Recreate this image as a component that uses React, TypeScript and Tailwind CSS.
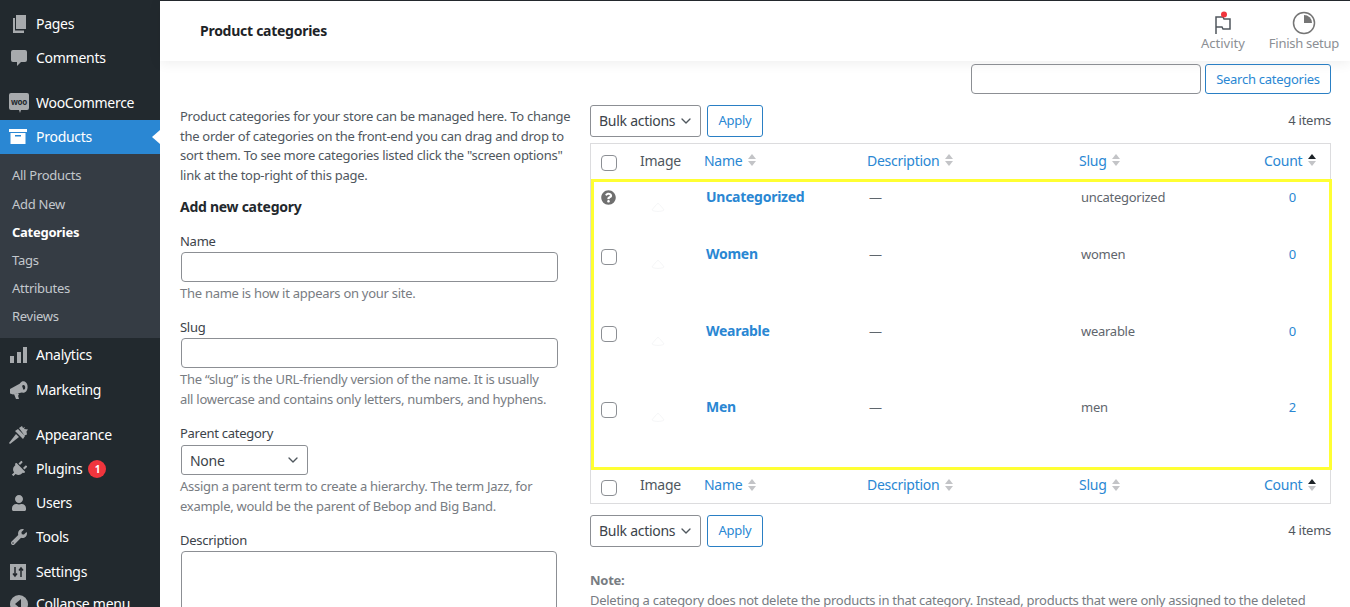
import { FaPlug, FaUser, FaWrench, FaQuestionCircle } from 'react-icons/fa'
import { ChevronDown } from 'lucide-react'

const font = { fontFamily: '"Noto Sans", sans-serif' }

const PagesIcon = () => (
  <svg viewBox="0 0 20 20" className="w-5 h-5 fill-[#a7aaad]">
    <path d="M7 1h10v14H7z" />
    <path d="M4 4h2v12.500h9V19H4z" />
  </svg>
)

const CommentsIcon = () => (
  <svg viewBox="0 0 20 20" className="w-5 h-5 fill-[#a7aaad]">
    <path d="M4 2h12a2 2 0 0 1 2 2v8a2 2 0 0 1-2 2h-4l-4 4v-4H4a2 2 0 0 1-2-2V4a2 2 0 0 1 2-2z" />
  </svg>
)

const WooIcon = () => (
  <svg viewBox="0 0 20 20" className="w-5 h-5">
    <path className="fill-[#a7aaad]" d="M2 0h16a2 2 0 0 1 2 2v13a2 2 0 0 1-2 2h-6l-1 3-1-3H2a2 2 0 0 1-2-2V2a2 2 0 0 1 2-2z" />
    <text x="10" y="11.500" textAnchor="middle" fontSize="8" fontWeight="700" fill="#23282d">woo</text>
  </svg>
)

const ProductsIcon = () => (
  <svg viewBox="0 0 20 20" className="w-5 h-5 fill-white">
    <path d="M0 2h18v3H0z" />
    <path fillRule="evenodd" d="M1.500 6h15v11h-15zM6 8v1.500h6V8z" />
  </svg>
)

const AnalyticsIcon = () => (
  <svg viewBox="0 0 20 20" className="w-5 h-5 fill-[#a7aaad]">
    <path d="M1 11h4v7H1zM8 7h4v11H8zM14 2h4v16h-4z" />
  </svg>
)

const MarketingIcon = () => (
  <svg viewBox="0 0 20 20" className="w-5 h-5 fill-[#a7aaad]">
    <path d="M1 9l11-6 3 9-11 2.500-3-1z" />
    <path fillRule="evenodd" d="M13 1.500c2.500-1 5 1 5.500 4s-.5 6-3 7-4.500-1.500-5-4.500.5-5.500 2.500-6.500zM14 5c-1 .5-1 2-.7 3s1 2 2 1.600 1-2 .8-3-1-2-2.100-1.600z" />
    <path d="M5 14l4-1 1 2-1 .5L10 19H7z" />
  </svg>
)

const AppearanceIcon = () => (
  <svg viewBox="0 0 20 20" className="w-5 h-5 fill-[#a7aaad]">
    <path d="M0 18l7-9 3 3-9 7z" />
    <path d="M6 6l3-2 7 7-2 3zM10 3l3-2 1 2 2-1-1 2 4 .5-1.500 2 .5 3-2.500 1z" />
  </svg>
)

const SettingsIcon = () => (
  <svg viewBox="0 0 20 20" className="w-5 h-5">
    <path className="fill-[#a7aaad]" d="M1 2h16v16H1z" />
    <path stroke="#23282d" strokeWidth="1.500" fill="none" d="M6 5v9M4 11.500L6 14l2-2.500M12 15V6M10 8.500L12 6l2 2.500" />
  </svg>
)

const CollapseIcon = () => (
  <svg viewBox="0 0 20 20" className="w-5 h-5">
    <circle cx="10" cy="10" r="9" className="fill-[#a7aaad]" />
    <path d="M12 5v10l-6-5z" fill="#23282d" />
  </svg>
)

const Item = ({ icon, label, badge, active, className = '' }: { icon: React.ReactNode; label: string; badge?: string; active?: boolean; className?: string }) => (
  <div className={`relative flex items-center h-[34px] text-[14px] text-white whitespace-nowrap ${active ? 'bg-[#2a87d3]' : ''} ${className}`}>
    <span className="w-[36px] flex justify-center pl-[1px] shrink-0">{icon}</span>
    <span className="pb-[2px]">{label}</span>
    {badge && (
      <span className="ml-[6px] w-[18px] h-[18px] rounded-full bg-[#f0353d] text-[10px] font-bold flex items-center justify-center">{badge}</span>
    )}
    {active && (
      <span className="absolute right-0 top-[10px] border-y-[7px] border-r-[8px] border-y-transparent border-r-white" />
    )}
  </div>
)

const Sidebar = () => (
  <aside className="w-[160px] shrink-0 h-[607px] bg-[#22292e] overflow-hidden pt-[7px]">
    <Item icon={<PagesIcon />} label="Pages" />
    <Item icon={<CommentsIcon />} label="Comments" />
    <div className="h-[11px]" />
    <Item icon={<WooIcon />} label="WooCommerce" />
    <Item icon={<ProductsIcon />} label="Products" active />
    <div className="bg-[#353c44] h-[184px] pt-[8px] pl-[12px] text-[13px] text-[#c3c8cd]">
      <div className="h-[28px] flex items-center">All Products</div>
      <div className="h-[29px] flex items-center">Add New</div>
      <div className="h-[28px] flex items-center font-bold text-white">Categories</div>
      <div className="h-[28px] flex items-center">Tags</div>
      <div className="h-[28px] flex items-center">Attributes</div>
      <div className="h-[28px] flex items-center">Reviews</div>
    </div>
    <Item icon={<AnalyticsIcon />} label="Analytics" />
    <Item icon={<MarketingIcon />} label="Marketing" className="h-[36px]" />
    <div className="h-[10px]" />
    <Item icon={<AppearanceIcon />} label="Appearance" />
    <Item icon={<FaPlug size={17} className="text-[#a7aaad] rotate-45" />} label="Plugins" badge="1" />
    <Item icon={<FaUser size={16} className="text-[#a7aaad]" />} label="Users" />
    <Item icon={<FaWrench size={16} className="text-[#a7aaad]" />} label="Tools" />
    <Item icon={<SettingsIcon />} label="Settings" className="h-[36px]" />
    <Item icon={<CollapseIcon />} label="Collapse menu" className="text-[#c3c8cd] text-[13px] -mt-[3px]" />
  </aside>
)

const SortArrows = ({ asc }: { asc?: boolean }) => (
  <span className="ml-[6px] inline-flex flex-col gap-[2px]">
    <span className={`border-x-[4px] border-b-[5px] border-x-transparent ${asc ? 'border-b-[#1d2327]' : 'border-b-[#c3c4c7]'}`} />
    <span className="border-x-[4px] border-t-[5px] border-x-transparent border-t-[#c3c4c7]" />
  </span>
)

const Checkbox = () => <span className="block w-4 h-4 rounded-[4px] border border-[#8c8f94] bg-white" />

const BulkBar = () => (
  <div className="flex items-center">
    <div className="w-[111px] h-[32px] rounded-[3px] border border-[#8c8f94] pl-[8px] pr-[6px] pb-[2px] flex items-center justify-between text-[14px] text-[#3c434a] whitespace-nowrap">
      Bulk actions
      <ChevronDown size={16} className="text-[#50575e] shrink-0 mt-[2px]" />
    </div>
    <div className="ml-[6px] w-[56px] h-[32px] rounded-[3px] border border-[#2a7fc4] text-[#2a87d3] text-[13px] flex items-center justify-center">Apply</div>
    <span className="ml-auto text-[13px] text-[#50575e]">4 items</span>
  </div>
)

const HeadRow = ({ className = '' }: { className?: string }) => (
  <div className={`flex items-center pb-[2px] text-[14px] text-[#2a87d3] ${className}`}>
    <span className="w-[49px] pl-[10px] mt-[6px]"><Checkbox /></span>
    <span className="w-[64px] text-[#50575e]">Image</span>
    <span className="w-[163px] flex items-center">Name<SortArrows /></span>
    <span className="w-[212px] flex items-center">Description<SortArrows /></span>
    <span className="w-[185px] flex items-center">Slug<SortArrows /></span>
    <span className="flex items-center">Count<SortArrows asc /></span>
  </div>
)

const categories = [
  { name: 'Uncategorized', slug: 'uncategorized', count: '0', h: 'h-[57px]', noCheck: true },
  { name: 'Women', slug: 'women', count: '0', h: 'h-[77px]' },
  { name: 'Wearable', slug: 'wearable', count: '0', h: 'h-[76px]' },
  { name: 'Men', slug: 'men', count: '2', h: 'h-[74px]' },
]

const Thumb = () => (
  <svg viewBox="0 0 16 16" className="w-[16px] h-[16px] ml-[10px] mt-[16px]">
    <path d="M2 11c2-3 4-5 6-7 2 2 4 4 6 7-3 2-9 2-12 0z" fill="none" stroke="#f6f7f8" strokeWidth="1" />
  </svg>
)

const CategoryRow = ({ name, slug, count, h, noCheck }: { name: string; slug: string; count: string; h: string; noCheck?: boolean }) => (
  <div className={`flex items-start text-[13px] ${h}`}>
    <span className={`w-[46px] pl-[7px] ${noCheck ? 'pt-[7px]' : 'pt-[9px]'}`}>
      {noCheck ? <FaQuestionCircle size={15} className="text-[#6f6f6f]" /> : <Checkbox />}
    </span>
    <span className="w-[66px]"><Thumb /></span>
    <span className="w-[163px] pt-[3px] text-[14px] font-bold text-[#2a87d3]">{name}</span>
    <span className="w-[212px] pt-[5px] text-[#5f666d]">—</span>
    <span className="w-[190px] pt-[5px] text-[#5f666d]">{slug}</span>
    <span className="w-[25px] pt-[5px] text-right text-[#2a87d3]">{count}</span>
  </div>
)

const Label = ({ children }: { children: React.ReactNode }) => (
  <div className="text-[13px] text-[#3c434a] leading-[20px]">{children}</div>
)

const Help = ({ children, className = 'mt-[1px]' }: { children: React.ReactNode; className?: string }) => (
  <p className={`text-[13px] text-[#787c82] leading-[20px] whitespace-nowrap ${className}`}>{children}</p>
)

const FormColumn = () => (
  <div className="w-[391px] shrink-0 pt-[2px]">
    <p className="text-[13px] text-[#50575e] leading-[19.500px] whitespace-nowrap">
      Product categories for your store can be managed here. To change<br />
      the order of categories on the front-end you can drag and drop to<br />
      sort them. To see more categories listed click the "screen options"<br />
      link at the top-right of this page.
    </p>
    <h2 className="mt-[12px] text-[14px] font-bold text-[#23282d] leading-[20px]">Add new category</h2>
    <div className="mt-[14px]"><Label>Name</Label></div>
    <div className="ml-[1px] mt-[1px] w-[377px] h-[30px] rounded-[4px] border border-[#8c8f94]" />
    <Help>The name is how it appears on your site.</Help>
    <div className="mt-[14px]"><Label>Slug</Label></div>
    <div className="ml-[1px] mt-[1px] w-[377px] h-[30px] rounded-[4px] border border-[#8c8f94]" />
    <Help>
      The “slug” is the URL-friendly version of the name. It is usually<br />
      all lowercase and contains only letters, numbers, and hyphens.
    </Help>
    <div className="mt-[14px]"><Label>Parent category</Label></div>
    <div className="ml-[1px] mt-[2px] w-[127px] h-[30px] rounded-[3px] border border-[#8c8f94] pl-[8px] pr-[6px] flex items-center justify-between text-[14px] text-[#3c434a]">
      None
      <ChevronDown size={16} className="text-[#50575e]" />
    </div>
    <Help className="mt-[1px]">
      Assign a parent term to create a hierarchy. The term Jazz, for<br />
      example, would be the parent of Bebop and Big Band.
    </Help>
    <div className="mt-[14px]"><Label>Description</Label></div>
    <div className="ml-[1px] mt-[1px] w-[376px] h-[80px] rounded-[4px] border border-[#8c8f94]" />
  </div>
)

const TableColumn = () => (
  <div className="w-[741px] ml-[19px] shrink-0">
    <BulkBar />
    <div className="mt-[6px] border border-[#dcdcde] bg-white">
      <HeadRow className="h-[34px] mb-[1px]" />
      <div className="border-[3px] border-[#ffff33] pt-[1px] -mr-[2px]">
        {categories.map((c) => (
          <CategoryRow key={c.slug} {...c} />
        ))}
      </div>
      <HeadRow className="h-[31px] mb-[2px]" />
    </div>
    <div className="mt-[11px]"><BulkBar /></div>
    <p className="mt-[23px] text-[13px] font-bold text-[#787c82] leading-[20px]">Note:</p>
    <p className="text-[13px] text-[#787c82] leading-[20px] whitespace-nowrap">
      Deleting a category does not delete the products in that category. Instead, products that were only assigned to the deleted
    </p>
  </div>
)

export default function App() {
  return (
    <div className="flex h-[607px] w-[1350px] overflow-hidden bg-white tracking-[-0.27px]" style={font}>
      <Sidebar />
      <main className="flex-1 min-w-0">
        <header className="h-[61px] border-t border-[#23282d] shadow-[0_2px_12px_rgba(0,0,0,0.07)] flex items-center pl-[40px] pr-[11px]">
          <h1 className="text-[14px] font-bold text-[#1d2327] pb-[2px]">Product categories</h1>
          <div className="ml-auto flex text-[13px] text-[#8c8f94] gap-[24px]">
            <div className="flex flex-col items-center tracking-normal">
              <svg viewBox="0 0 24 24" className="w-6 h-6 mt-[1px] -mb-[1px]" fill="none" stroke="#50575e" strokeWidth="1.500">
                <path d="M5 23V6h7l1 2h6v10h-7l-1-2H5" />
                <circle cx="13" cy="3.500" r="3" fill="#f0353d" stroke="none" />
              </svg>
              <span className="leading-[18px]">Activity</span>
            </div>
            <div className="flex flex-col items-center">
              <svg viewBox="0 0 24 24" className="w-6 h-6 mt-[1px] -mb-[1px]">
                <circle cx="12" cy="12" r="10.500" fill="none" stroke="#757575" strokeWidth="1.500" />
                <path d="M12 4a8 8 0 0 1 8 8h-8z" fill="#757575" />
              </svg>
              <span className="leading-[18px]">Finish setup</span>
            </div>
          </div>
        </header>
        <div className="pl-[20px] pr-[19px]">
          <div className="flex justify-end mt-[3px]">
            <div className="w-[230px] h-[30px] rounded-[4px] border border-[#8c8f94]" />
            <div className="ml-[4px] w-[126px] h-[30px] rounded-[3px] border border-[#2a7fc4] text-[#2a87d3] text-[13px] pt-[1px] flex items-center justify-center">Search categories</div>
          </div>
          <div className="flex mt-[11px]">
            <FormColumn />
            <TableColumn />
          </div>
        </div>
      </main>
    </div>
  )
}
